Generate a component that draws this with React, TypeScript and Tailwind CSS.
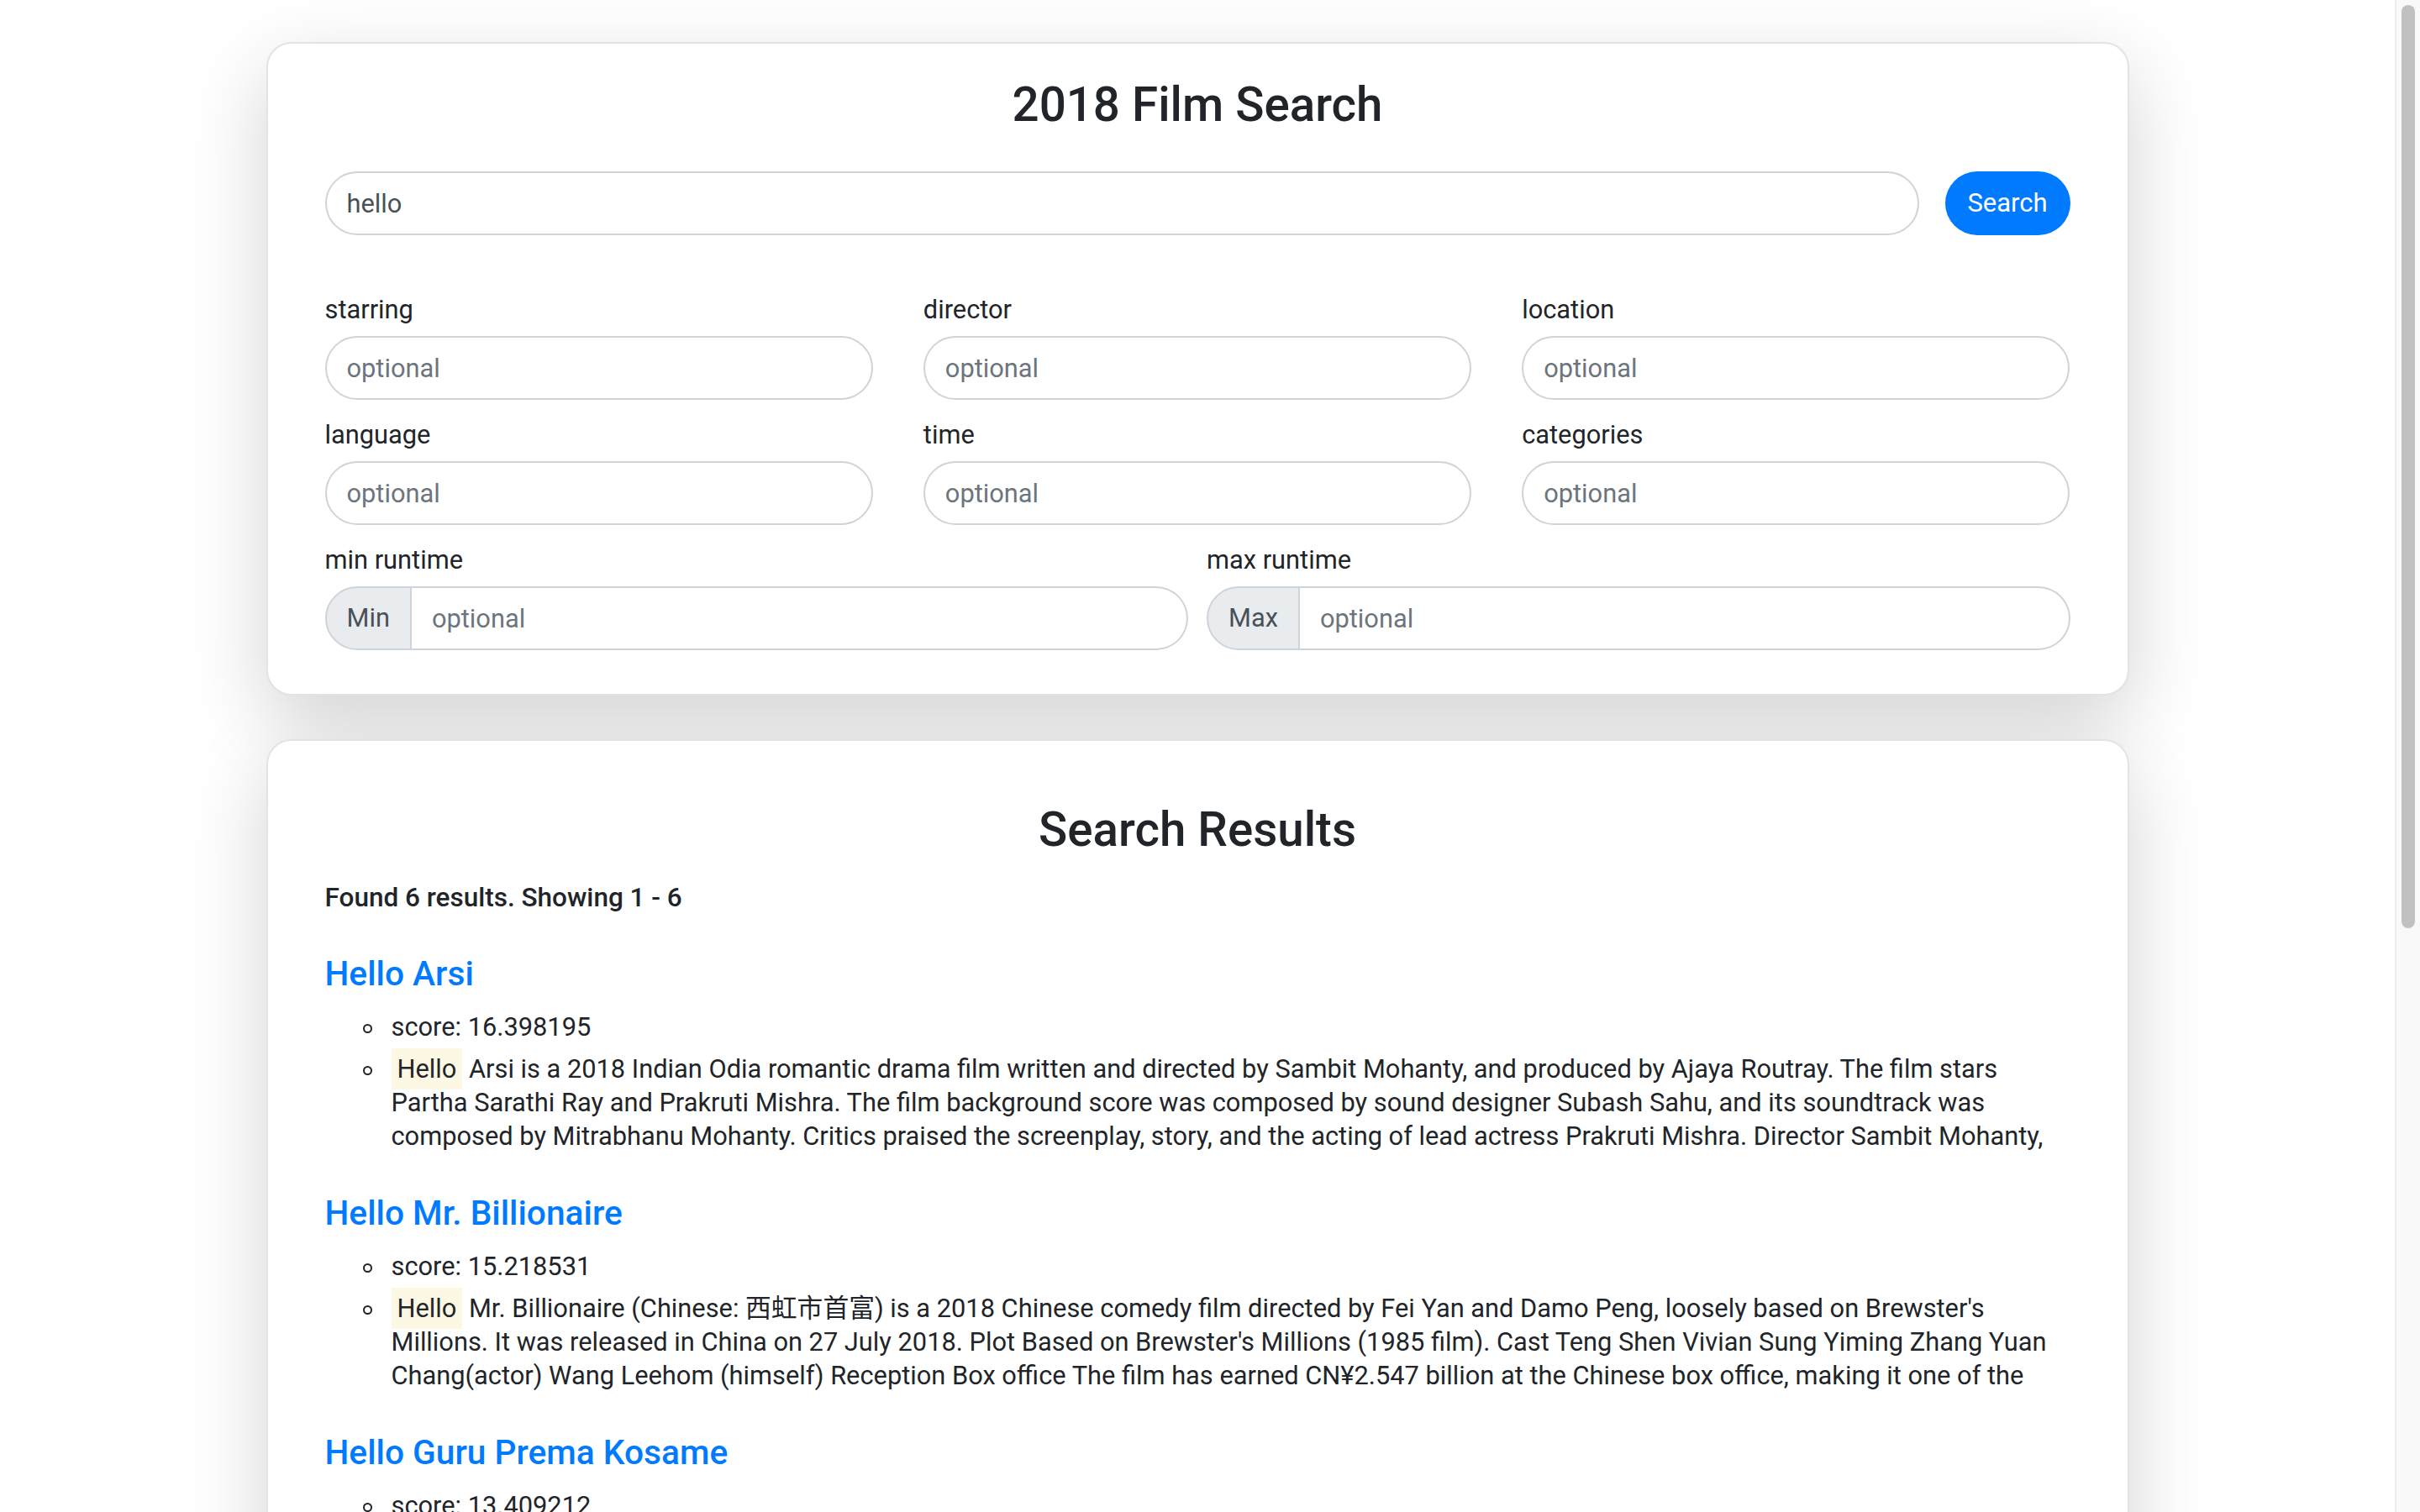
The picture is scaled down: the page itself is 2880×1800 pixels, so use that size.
import React from 'react';

type Result = {
  title: string;
  score: string;
  lines: string[];
};

const results: Result[] = [
  {
    title: 'Hello Arsi',
    score: '16.398195',
    lines: [
      ' Arsi is a 2018 Indian Odia romantic drama film written and directed by Sambit Mohanty, and produced by Ajaya Routray. The film stars',
      'Partha Sarathi Ray and Prakruti Mishra. The film background score was composed by sound designer Subash Sahu, and its soundtrack was',
      'composed by Mitrabhanu Mohanty. Critics praised the screenplay, story, and the acting of lead actress Prakruti Mishra. Director Sambit Mohanty,',
    ],
  },
  {
    title: 'Hello Mr. Billionaire',
    score: '15.218531',
    lines: [
      " Mr. Billionaire (Chinese: 西虹市首富) is a 2018 Chinese comedy film directed by Fei Yan and Damo Peng, loosely based on Brewster's",
      "Millions. It was released in China on 27 July 2018. Plot Based on Brewster's Millions (1985 film). Cast Teng Shen Vivian Sung Yiming Zhang Yuan",
      'Chang(actor) Wang Leehom (himself) Reception Box office The film has earned CN¥2.547 billion at the Chinese box office, making it one of the',
    ],
  },
  {
    title: 'Hello Guru Prema Kosame',
    score: '13.409212',
    lines: [
      ' Guru Prema Kosame is a 2018 Indian Telugu-language romantic comedy film directed by Trinadha Rao Nakkina and produced by Dil Raju.',
      'The film stars Ram Pothineni, Anupama Parameswaran and Prakash Raj in the lead roles, with music composed by Devi Sri Prasad.',
      'The film was released worldwide on 18 October 2018 and received mixed reviews from critics and audiences.',
    ],
  },
];

const inputClass =
  'h-[76px] w-full rounded-full border-2 border-[#ced4da] bg-white px-[24px] text-[30.8px] text-[#495057] placeholder:text-[#6c757d] outline-none';

function Field({ label }: { label: string }) {
  return (
    <div className="flex flex-col">
      <label className="mb-[7px] text-[30.8px] leading-[48px] text-[#212529]">{label}</label>
      <input className={inputClass} placeholder="optional" />
    </div>
  );
}

function RangeField({ label, prefix }: { label: string; prefix: string }) {
  return (
    <div className="flex flex-col">
      <label className="mb-[7px] text-[30.8px] leading-[48px] text-[#212529]">{label}</label>
      <div className="flex h-[76px]">
        <span className="flex items-center rounded-l-full border-2 border-[#ced4da] bg-[#e9ecef] px-[24px] text-[30.8px] text-[#495057]">
          {prefix}
        </span>
        <input
          className="h-full min-w-0 flex-1 rounded-r-full border-2 border-l-0 border-[#ced4da] bg-white px-[24px] text-[30.8px] text-[#495057] placeholder:text-[#6c757d] outline-none"
          placeholder="optional"
        />
      </div>
    </div>
  );
}

function Bullet({ children }: { children: React.ReactNode }) {
  return (
    <li className="flex">
      <span className="flex h-[40px] w-[34px] shrink-0 items-center">
        <span className="mt-[3px] h-[11px] w-[11px] rounded-full border-[2.5px] border-[#212529]" />
      </span>
      <div className="flex-1">{children}</div>
    </li>
  );
}

export default function App() {
  return (
    <div
      className="flex h-[1800px] w-[2880px] overflow-hidden bg-white text-[#212529]"
      style={{ fontFamily: 'Roboto, "Noto Sans CJK SC", sans-serif' }}
    >
      <main className="flex flex-1 flex-col items-center">
        {/* Search form */}
        <section className="mt-[50px] w-[2217px] rounded-[30px] border-2 border-[#e3e3e3] bg-white px-[68px] pb-[52px] pt-[40px] shadow-[0_32px_96px_rgba(0,0,0,0.175)]">
          <h2 className="text-center text-[56.5px] font-medium leading-[67px]">2018 Film Search</h2>

          <div className="mt-[45px] flex items-center gap-[31px]">
            <input className={inputClass + ' flex-1'} defaultValue="hello" />
            <button className="h-[76px] w-[149px] rounded-full bg-[#007bff] text-[31px] text-white">Search</button>
          </div>

          <div className="mt-[65px] grid grid-cols-3 gap-x-[60px] gap-y-[18px]">
            <Field label="starring" />
            <Field label="director" />
            <Field label="location" />
            <Field label="language" />
            <Field label="time" />
            <Field label="categories" />
          </div>

          <div className="mt-[18px] grid grid-cols-2 gap-x-[22px]">
            <RangeField label="min runtime" prefix="Min" />
            <RangeField label="max runtime" prefix="Max" />
          </div>
        </section>

        {/* Results */}
        <section className="mt-[52px] w-[2217px] shrink-0 rounded-[30px] border-2 border-[#e3e3e3] bg-white px-[68px] pb-[80px] pt-[73px] shadow-[0_32px_96px_rgba(0,0,0,0.175)]">
          <h2 className="text-center text-[56.5px] font-medium leading-[67px]">Search Results</h2>
          <h6 className="mt-[23px] text-[31.5px] font-medium leading-[48px]">Found 6 results. Showing 1 - 6</h6>

          <div className="mt-[42px] flex flex-col gap-[47px]">
            {results.map((r) => (
              <div key={r.title}>
                <h5 className="text-[40.7px] font-medium leading-[48px]">
                  <a className="text-[#007bff]" href="#">
                    {r.title}
                  </a>
                </h5>
                <ul className="mt-[20px] flex flex-col gap-[10px] pl-[45px] text-[30.8px] leading-[40px]">
                  <Bullet>score: {r.score}</Bullet>
                  <Bullet>
                    <mark className="bg-[#fcf8e3] px-[7px] py-[6px] text-[#212529]">Hello</mark>
                    {r.lines.map((line, i) => (
                      <React.Fragment key={i}>
                        {i > 0 && <br />}
                        {line}
                      </React.Fragment>
                    ))}
                  </Bullet>
                </ul>
              </div>
            ))}
          </div>
        </section>
      </main>

      {/* scrollbar */}
      <div className="flex w-[30px] shrink-0 justify-center border-l-2 border-[#ececec] bg-[#f9f9f9] pt-[6px]">
        <div className="h-[1099px] w-[16px] rounded-full bg-[#c1c1c1]" />
      </div>
    </div>
  );
}
